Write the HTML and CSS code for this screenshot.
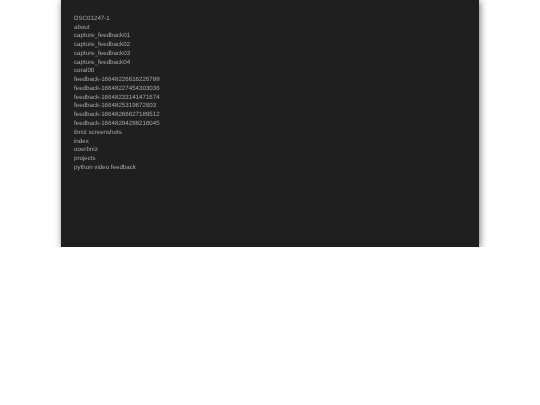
FILE: index.html
```html
<!DOCTYPE html>
<html lang="en">
<head>
  <meta charset="UTF-8">
  <meta name="viewport" content="width=device-width, initial-scale=1.0">
  <title>files</title>
  <link rel="stylesheet" href="styles.css">
</head>
<body>
<div class="panel">
  <ul class="file-list">
    <li>DSC01247-1</li>
    <li>about</li>
    <li>capture_feedback01</li>
    <li>capture_feedback02</li>
    <li>capture_feedback03</li>
    <li>capture_feedback04</li>
    <li>coral00</li>
    <li>feedback-16648226616226788</li>
    <li>feedback-16648227454303036</li>
    <li>feedback-16648233141471674</li>
    <li>feedback-1664825319672603</li>
    <li>feedback-16648266627189512</li>
    <li>feedback-16648284288216045</li>
    <li>ibniz screenshots</li>
    <li>index</li>
    <li>ooerbniz</li>
    <li>projects</li>
    <li>python video feedback</li>
  </ul>
</div>
</body>
</html>
```

FILE: styles.css
```css
body { margin: 0; background: #fff; font-family: "Liberation Sans", Arial, sans-serif; }
.panel { width: 418px; height: 247px; margin: 0 auto; box-sizing: border-box; padding: 14.8px 13px 0; background: #1f1f1f; box-shadow: 1px 1px 7px rgba(0,0,0,0.55); }
.file-list { list-style: none; margin: 0; padding: 0; color: #a6a6a6; font-size: 6.2px; line-height: 8.77px; text-rendering: geometricPrecision; filter: blur(0.35px); }
```
